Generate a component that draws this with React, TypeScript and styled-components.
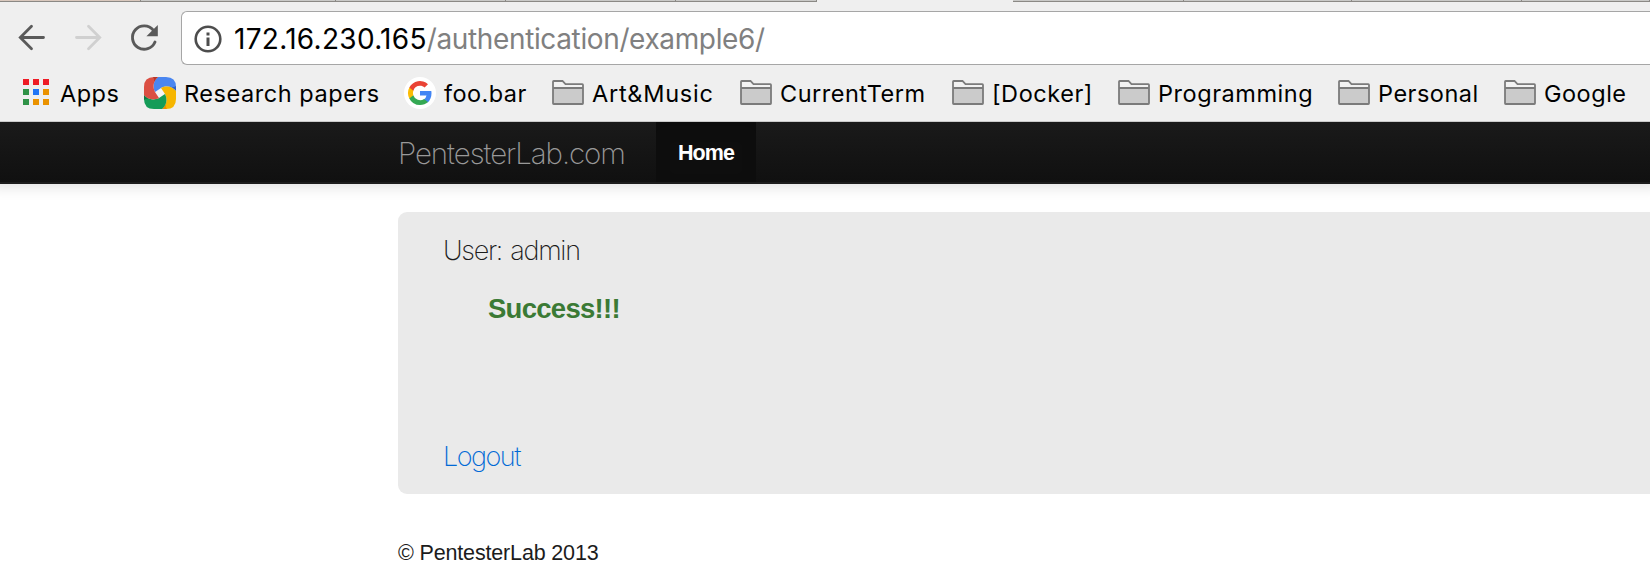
import React from "react";
import styled, { createGlobalStyle } from "styled-components";

const GlobalStyle = createGlobalStyle`
  * { box-sizing: border-box; }
  body { margin: 0; background: #fff; overflow: hidden; }
`;

const ui = `Inter, "Noto Sans", sans-serif`;
const helvetica = `"Liberation Sans", Arial, sans-serif`;

const Window = styled.div`
  width: 1650px;
  height: 588px;
  overflow: hidden;
  display: flex;
  flex-direction: column;
  background: #fff;
`;

const Chrome = styled.header`
  position: relative;
  z-index: 1;
  flex: none;
  height: 122px;
  background: #efefef;
  border-bottom: 1px solid #cacaca;
`;

const TabStrip = styled.div`
  display: flex;
  height: 2px;
`;

const Tab = styled.div<{ $width: number; $active?: boolean; $tint?: string }>`
  flex: none;
  width: ${(p) => p.$width}px;
  height: 2px;
  background: ${(p) => (p.$active ? "#efefef" : p.$tint ?? "#c9c9c7")};
  border-bottom: 1px solid ${(p) => (p.$active ? "#efefef" : "#8b8985")};
  border-right: ${(p) => (p.$active ? "none" : "1px solid #8b8985")};
`;

const Toolbar = styled.div`
  display: flex;
  align-items: center;
  height: 72px;
  padding-left: 16px;
`;

const NavButton = styled.button<{ $width: number }>`
  flex: none;
  width: ${(p) => p.$width}px;
  height: 40px;
  padding: 0;
  border: 0;
  background: none;
  display: flex;
  align-items: center;
`;

const AddressBar = styled.div`
  flex: 1;
  display: flex;
  align-items: center;
  height: 54px;
  padding: 1px 0 0 12px;
  background: #fff;
  border: 1px solid #a6a6a6;
  border-right: 0;
  border-radius: 6px 0 0 6px;
`;

const Url = styled.div`
  display: flex;
  margin: 1px 0 0 12px;
  font: 420 28px/40px ${ui};
  white-space: pre;
`;

const Host = styled.span`
  color: #000;
  letter-spacing: 0.3px;
`;

const Path = styled.span`
  color: #808080;
  letter-spacing: -0.37px;
`;

const Bookmarks = styled.nav`
  display: flex;
  align-items: center;
  height: 40px;
  padding-left: 23px;
`;

const Bookmark = styled.a<{ $width: number; $gap: number; $spacing: number }>`
  flex: none;
  display: flex;
  align-items: center;
  gap: ${(p) => p.$gap}px;
  width: ${(p) => p.$width}px;
  color: #000;
  font: 430 23.5px/32px ${ui};
  letter-spacing: ${(p) => p.$spacing}px;
  white-space: nowrap;

  svg {
    flex: none;
    margin-bottom: 2px;
  }
`;

const Navbar = styled.nav`
  flex: none;
  display: flex;
  height: 62px;
  padding-left: 398px;
  background: linear-gradient(#1a1a1a, #101010);
  border-bottom: 2px solid #1c1c1c;
  box-shadow: 0 -8px 14px 10px rgba(0, 0, 0, 0.14);
`;

const Brand = styled.a`
  width: 258px;
  padding-top: 1px;
  color: #999;
  font: 230 29.5px/60px ${ui};
  letter-spacing: -1.08px;
`;

const NavItem = styled.a`
  display: flex;
  justify-content: center;
  width: 100px;
  padding-top: 1px;
  background: #0e0e0e;
  box-shadow: inset 0 6px 16px rgba(0, 0, 0, 0.12);
  color: #fff;
  font: 700 21.5px/60px ${helvetica};
  letter-spacing: -0.95px;
`;

const Content = styled.main`
  padding: 28px 0 0 398px;
`;

const Card = styled.section`
  height: 282px;
  padding: 21px 0 0 45px;
  background: #eaeaea;
  border-radius: 9px 0 0 9px;
`;

const UserLine = styled.p`
  margin: 0;
  color: #1c1c1c;
  font: 240 27px/36px ${ui};
  letter-spacing: -1.3px;
  word-spacing: 2px;
`;

const Success = styled.p`
  margin: 22px 0 0 45px;
  color: #3b7a35;
  font: 700 27.5px/36px ${helvetica};
  letter-spacing: -0.72px;
`;

const Logout = styled.a`
  display: block;
  margin-top: 112px;
  color: #0069d6;
  font: 240 27px/36px ${ui};
  letter-spacing: -1.5px;
`;

const Footer = styled.footer`
  margin-top: 46px;
  color: #1c1c1c;
  font: 400 21.5px/26px ${helvetica};
  letter-spacing: -0.16px;
`;

const BackIcon = () => (
  <svg width="32" height="32" viewBox="0 0 32 32" fill="none" stroke="#5a5a5a" strokeWidth="2.8" strokeLinecap="round">
    <path d="M27.500 15.500H4.500M15.500 4.300L4.300 15.500l11.200 11.200" />
  </svg>
);

const ForwardIcon = () => (
  <svg width="32" height="32" viewBox="0 0 32 32" fill="none" stroke="#d0d0d0" strokeWidth="2.8" strokeLinecap="round">
    <path d="M3.500 15.500h23M15.500 4.300L26.700 15.500 15.500 26.700" />
  </svg>
);

const ReloadIcon = () => (
  <svg width="32" height="32" viewBox="0 0 32 32" fill="none">
    <path d="M25.300 8.200A11.700 11.700 0 1 0 27 20" stroke="#5a5a5a" strokeWidth="2.900" strokeLinecap="round" />
    <path d="M29.800 3v11.200H18.400z" fill="#5a5a5a" />
  </svg>
);

const InfoIcon = () => (
  <svg width="28" height="28" viewBox="0 0 28 28" fill="none">
    <circle cx="14" cy="14" r="12.300" stroke="#4d4d4d" strokeWidth="2.600" />
    <path d="M12.500 7.500h3v3h-3zM12.500 12.500h3v8.500h-3z" fill="#4d4d4d" />
  </svg>
);

const appColors = ["#ee1c25", "#ee1c25", "#ee1c25", "#2f9247", "#2175f5", "#ea9200", "#2f9247", "#ea9200", "#ea9200"];

const AppsIcon = () => (
  <svg width="26" height="28" viewBox="0 0 26 28">
    {appColors.map((fill, i) => (
      <rect key={i} x={(i % 3) * 10} y={Math.floor(i / 3) * 10} width="6" height="6" fill={fill} />
    ))}
  </svg>
);

const ribbons = [
  { angle: 0, fill: "#4a86f0", fold: "#2f62c8" },
  { angle: 90, fill: "#f6b600", fold: "#ee8f00" },
  { angle: 180, fill: "#149c58", fold: "#0b7a43" },
  { angle: 270, fill: "#db4f43", fold: "#b5372c" },
];

const KnotIcon = () => (
  <svg width="32" height="32" viewBox="0 0 32 32">
    <path d="M17 10l5 7-7 5-5-7z" fill="#f4f4f4" />
    {ribbons.map((r) => (
      <g key={r.angle} transform={`rotate(${r.angle} 16 16)`}>
        <path
          d="M14 0H22Q32 0 32 10V14C29 10 23 8 17 11L11 15C8 9 10 3 14 0Z"
          fill={r.fill}
        />
        <path d="M32 9V14C30.500 12 28 10.300 25 9.500Q30 11 32 9Z" fill={r.fold} />
      </g>
    ))}
  </svg>
);

const GoogleIcon = () => (
  <svg width="32" height="32" viewBox="0 0 32 32">
    <circle cx="16" cy="16" r="16" fill="#fff" />
    <g transform="translate(4 4)">
      <path d="M23.500 12.300c0-.800-.1-1.600-.2-2.300H12v4.600h6.500a5.500 5.500 0 0 1-2.400 3.600v3h3.900c2.200-2.100 3.500-5.100 3.500-8.900z" fill="#4285f4" />
      <path d="M12 24c3.200 0 6-1.100 8-2.900l-3.900-3a7.200 7.200 0 0 1-10.800-3.800h-4v3.100A12 12 0 0 0 12 24z" fill="#34a853" />
      <path d="M5.300 14.300a7.200 7.200 0 0 1 0-4.600V6.600h-4a12 12 0 0 0 0 10.800z" fill="#fbbc05" />
      <path d="M12 4.800c1.800 0 3.300.6 4.600 1.800L20 3.200A12 12 0 0 0 1.300 6.600l4 3.100A7.200 7.200 0 0 1 12 4.800z" fill="#ea4335" />
    </g>
  </svg>
);

const FolderIcon = () => (
  <svg width="32" height="26" viewBox="0 0 32 26">
    <path d="M1 9h30v15H1z" fill="#cbcbcb" />
    <path d="M1 8V1.700Q1 1 1.700 1h8.800l3 3.200h16.800q.7 0 .7.700V8z" fill="#f2f2f2" />
    <path d="M1 8.500V1.700Q1 1 1.700 1h8.800l3 3.200h16.800q.7 0 .7.700v18.400q0 .7-.7.700H1.700Q1 24 1 23.300zM1 8h30" fill="none" stroke="#7b7b7b" strokeWidth="1.800" />
  </svg>
);

const tabs = [
  { width: 141, tint: "#d9c8bd" },
  { width: 195 },
  { width: 170 },
  { width: 170 },
  { width: 141 },
  { width: 196, active: true },
  { width: 171 },
  { width: 168 },
  { width: 170 },
  { width: 128 },
];

const bookmarks = [
  { label: "Apps", icon: <AppsIcon />, width: 121, gap: 11, spacing: 0.5 },
  { label: "Research papers", icon: <KnotIcon />, width: 260, gap: 8, spacing: 0.55 },
  { label: "foo.bar", icon: <GoogleIcon />, width: 148, gap: 8, spacing: 0.45 },
  { label: "Art&Music", icon: <FolderIcon />, width: 188, gap: 8, spacing: 0.75 },
  { label: "CurrentTerm", icon: <FolderIcon />, width: 212, gap: 8, spacing: 0.5 },
  { label: "[Docker]", icon: <FolderIcon />, width: 166, gap: 8, spacing: 0.55 },
  { label: "Programming", icon: <FolderIcon />, width: 220, gap: 8, spacing: 0.55 },
  { label: "Personal", icon: <FolderIcon />, width: 166, gap: 8, spacing: 0.5 },
  { label: "Google", icon: <FolderIcon />, width: 146, gap: 8, spacing: 0.5 },
];

export default function App() {
  return (
    <Window>
      <GlobalStyle />
      <Chrome>
        <TabStrip>
          {tabs.map((t, i) => (
            <Tab key={i} $width={t.width} $active={t.active} $tint={t.tint} />
          ))}
        </TabStrip>
        <Toolbar>
          <NavButton $width={57} aria-label="Back"><BackIcon /></NavButton>
          <NavButton $width={55} aria-label="Forward"><ForwardIcon /></NavButton>
          <NavButton $width={53} aria-label="Reload"><ReloadIcon /></NavButton>
          <AddressBar>
            <InfoIcon />
            <Url><Host>172.16.230.165</Host><Path>/authentication/example6/</Path></Url>
          </AddressBar>
        </Toolbar>
        <Bookmarks>
          {bookmarks.map((b) => (
            <Bookmark key={b.label} $width={b.width} $gap={b.gap} $spacing={b.spacing}>
              {b.icon}
              {b.label}
            </Bookmark>
          ))}
        </Bookmarks>
      </Chrome>
      <Navbar>
        <Brand>PentesterLab.com</Brand>
        <NavItem>Home</NavItem>
      </Navbar>
      <Content>
        <Card>
          <UserLine>User: admin</UserLine>
          <Success>Success!!!</Success>
          <Logout>Logout</Logout>
        </Card>
        <Footer>© PentesterLab 2013</Footer>
      </Content>
    </Window>
  );
}
